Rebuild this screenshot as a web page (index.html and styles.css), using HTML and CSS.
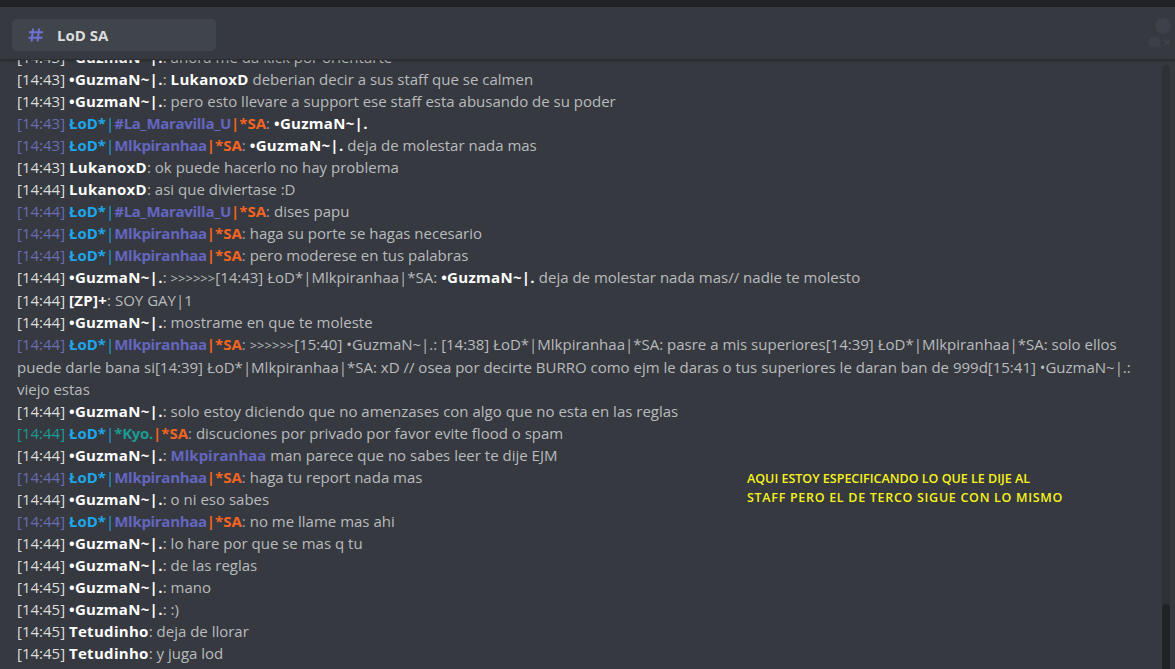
FILE: index.html
```html
<!DOCTYPE html>
<html lang="es">

<head>
    <meta charset="UTF-8">
    <meta name="viewport" content="width=device-width, initial-scale=1.0">
    <title>LoD SA</title>
    <link rel="stylesheet" href="styles.css">
</head>

<body>

    <div class="barra-superior"></div>

    <div class="cabecera">
        <div class="pestana">
            <svg class="icono-canal" width="16" height="14" viewBox="0 0 16 14">
                <path d="M5 0.5 L3.6 13.5 M11 0.5 L9.6 13.5 M1 4.3 H15 M0.5 9.7 H14.5" stroke="#6f72d6" stroke-width="2" fill="none"/>
            </svg>
            <span class="nombre-canal">LoD SA</span>
        </div>
        <div class="extras">
            <span class="circulo"></span>
            <div class="mini">
                <span class="cuadro"></span>
                <span class="cruz">✕</span>
            </div>
        </div>
    </div>

    <div class="chat">
        <div class="mensajes">
            <p class="linea"><span class="ts">[14:43]</span> <b class="nm">•GuzmaN~|.</b><span class="dp">:</span> <span class="tx">ahora me da kick por orientarte</span></p>
            <p class="linea"><span class="ts">[14:43]</span> <b class="nm">•GuzmaN~|.</b><span class="dp">:</span> <span class="tx"><b class="nm">LukanoxD</b> deberian decir a sus staff que se calmen</span></p>
            <p class="linea"><span class="ts">[14:43]</span> <b class="nm">•GuzmaN~|.</b><span class="dp">:</span> <span class="tx">pero esto llevare a support ese staff esta abusando de su poder</span></p>
            <p class="linea staff"><span class="ts">[14:43]</span> <b class="lod">ŁoD*</b><span class="barra">|</span><b class="rango">#La_Maravilla_U</b><b class="sa">|*SA</b><span class="dp">:</span> <span class="tx"><b class="nm">•GuzmaN~|.</b></span></p>
            <p class="linea staff"><span class="ts">[14:43]</span> <b class="lod">ŁoD*</b><span class="barra">|</span><b class="rango">Mlkpiranhaa</b><b class="sa">|*SA</b><span class="dp">:</span> <span class="tx"><b class="nm">•GuzmaN~|.</b> deja de molestar nada mas</span></p>
            <p class="linea"><span class="ts">[14:43]</span> <b class="nm">LukanoxD</b><span class="dp">:</span> <span class="tx">ok puede hacerlo no hay problema</span></p>
            <p class="linea"><span class="ts">[14:44]</span> <b class="nm">LukanoxD</b><span class="dp">:</span> <span class="tx">asi que diviertase :D</span></p>
            <p class="linea staff"><span class="ts">[14:44]</span> <b class="lod">ŁoD*</b><span class="barra">|</span><b class="rango">#La_Maravilla_U</b><b class="sa">|*SA</b><span class="dp">:</span> <span class="tx">dises papu</span></p>
            <p class="linea staff"><span class="ts">[14:44]</span> <b class="lod">ŁoD*</b><span class="barra">|</span><b class="rango">Mlkpiranhaa</b><b class="sa">|*SA</b><span class="dp">:</span> <span class="tx">haga su porte se hagas necesario</span></p>
            <p class="linea staff"><span class="ts">[14:44]</span> <b class="lod">ŁoD*</b><span class="barra">|</span><b class="rango">Mlkpiranhaa</b><b class="sa">|*SA</b><span class="dp">:</span> <span class="tx">pero moderese en tus palabras</span></p>
            <p class="linea"><span class="ts">[14:44]</span> <b class="nm">•GuzmaN~|.</b><span class="dp">:</span> <span class="tx"><span class="flechas">&gt;&gt;&gt;&gt;&gt;&gt;</span>[14:43] ŁoD*|Mlkpiranhaa|*SA: <b class="nm">•GuzmaN~|.</b> deja de molestar nada mas// nadie te molesto</span></p>
            <p class="linea"><span class="ts">[14:44]</span> <b class="nm">[ZP]+</b><span class="dp">:</span> <span class="tx">SOY GAY|1</span></p>
            <p class="linea"><span class="ts">[14:44]</span> <b class="nm">•GuzmaN~|.</b><span class="dp">:</span> <span class="tx">mostrame en que te moleste</span></p>
            <p class="linea staff"><span class="ts">[14:44]</span> <b class="lod">ŁoD*</b><span class="barra">|</span><b class="rango">Mlkpiranhaa</b><b class="sa">|*SA</b><span class="dp">:</span> <span class="tx"><span class="flechas">&gt;&gt;&gt;&gt;&gt;&gt;</span>[15:40] •GuzmaN~|.: [14:38] ŁoD*|Mlkpiranhaa|*SA: pasre a mis superiores[14:39] ŁoD*|Mlkpiranhaa|*SA: solo ellos<br>puede darle bana si[14:39] ŁoD*|Mlkpiranhaa|*SA: xD // osea por decirte BURRO como ejm le daras o tus superiores le daran ban de 999d[15:41] •GuzmaN~|.:<br>viejo estas</span></p>
            <p class="linea"><span class="ts">[14:44]</span> <b class="nm">•GuzmaN~|.</b><span class="dp">:</span> <span class="tx">solo estoy diciendo que no amenzases con algo que no esta en las reglas</span></p>
            <p class="linea kyo"><span class="ts">[14:44]</span> <b class="lod">ŁoD*</b><span class="barra">|</span><b class="rango">*Kyo.</b><b class="sa">|*SA</b><span class="dp">:</span> <span class="tx">discuciones por privado por favor evite flood o spam</span></p>
            <p class="linea"><span class="ts">[14:44]</span> <b class="nm">•GuzmaN~|.</b><span class="dp">:</span> <span class="tx"><b class="mencion">Mlkpiranhaa</b> man parece que no sabes leer te dije EJM</span></p>
            <p class="linea staff"><span class="ts">[14:44]</span> <b class="lod">ŁoD*</b><span class="barra">|</span><b class="rango">Mlkpiranhaa</b><b class="sa">|*SA</b><span class="dp">:</span> <span class="tx">haga tu report nada mas</span></p>
            <p class="linea"><span class="ts">[14:44]</span> <b class="nm">•GuzmaN~|.</b><span class="dp">:</span> <span class="tx">o ni eso sabes</span></p>
            <p class="linea staff"><span class="ts">[14:44]</span> <b class="lod">ŁoD*</b><span class="barra">|</span><b class="rango">Mlkpiranhaa</b><b class="sa">|*SA</b><span class="dp">:</span> <span class="tx">no me llame mas ahi</span></p>
            <p class="linea"><span class="ts">[14:44]</span> <b class="nm">•GuzmaN~|.</b><span class="dp">:</span> <span class="tx">lo hare por que se mas q tu</span></p>
            <p class="linea"><span class="ts">[14:44]</span> <b class="nm">•GuzmaN~|.</b><span class="dp">:</span> <span class="tx">de las reglas</span></p>
            <p class="linea"><span class="ts">[14:45]</span> <b class="nm">•GuzmaN~|.</b><span class="dp">:</span> <span class="tx">mano</span></p>
            <p class="linea"><span class="ts">[14:45]</span> <b class="nm">•GuzmaN~|.</b><span class="dp">:</span> <span class="tx">:)</span></p>
            <p class="linea"><span class="ts">[14:45]</span> <b class="nm">Tetudinho</b><span class="dp">:</span> <span class="tx">deja de llorar</span></p>
            <p class="linea"><span class="ts">[14:45]</span> <b class="nm">Tetudinho</b><span class="dp">:</span> <span class="tx">y juga lod</span></p>
            <p class="linea"><span class="ts">[14:45]</span> <b class="nm">•GuzmaN~|.</b><span class="dp">:</span> <span class="tx">ok</span></p>
        </div>

        <div class="scroll">
            <div class="scroll-barra"></div>
        </div>

        <p class="nota"><span>AQUI ESTOY ESPECIFICANDO LO QUE LE DIJE AL</span><br><span class="nota-ancha">STAFF PERO EL DE TERCO SIGUE CON LO MISMO</span></p>
    </div>

</body>

</html>
```

FILE: styles.css
```css
body {
    margin: 0;
    background-color: #36393f;
    font-family: "Open Sans", "Noto Sans", sans-serif;
    height: 669px;
    overflow: hidden;
    display: flex;
    flex-direction: column;
}

.barra-superior {
    height: 7px;
    background-color: #202225;
}

.cabecera {
    height: 52px;
    background-color: #36393f;
    border-bottom: 1px solid #2b2d31;
    box-shadow: 0 1px 2px rgba(0, 0, 0, 0.25);
    display: flex;
    justify-content: space-between;
    padding-left: 12px;
    position: relative;
    z-index: 2;
}

.pestana {
    margin-top: 12px;
    width: 204px;
    height: 32px;
    background-color: #40444b;
    border-radius: 5px;
    display: flex;
    align-items: center;
    gap: 13px;
    padding-left: 16px;
    box-sizing: border-box;
}

.nombre-canal {
    color: #dcddde;
    font-weight: bold;
    font-size: 15px;
}

.extras {
    width: 45px;
    display: flex;
    flex-direction: column;
    align-items: flex-end;
    padding-right: 4px;
}

.circulo {
    margin-top: 11px;
    width: 16px;
    height: 16px;
    border-radius: 50%;
    background-color: #3e4147;
}

.mini {
    display: flex;
    align-items: center;
    gap: 3px;
    margin-top: 3px;
}

.cuadro {
    width: 11px;
    height: 10px;
    border-radius: 3px;
    background-color: #3c3f45;
}

.cruz {
    color: #44474d;
    font-size: 10px;
    line-height: 10px;
}

.chat {
    flex: 1;
    display: flex;
    overflow: hidden;
    position: relative;
}

.mensajes {
    flex: 1;
    padding-left: 17px;
    margin-top: -14px;
}

.linea {
    margin: 0;
    font-size: 15px;
    line-height: 22px;
    color: #dcddde;
    white-space: nowrap;
}

.ts {
    color: #dcddde;
}

.nm {
    color: #ffffff;
    letter-spacing: 0.3px;
}

.dp {
    color: #b9bbbe;
}

.tx {
    color: #b9bbbe;
}

.flechas {
    font-size: 13px;
}

.staff .ts {
    color: #6a6cb4;
}

.lod {
    color: #1ea6e8;
}

.barra {
    color: #1ea6e8;
}

.rango {
    color: #6466c0;
    letter-spacing: -0.3px;
}

.sa {
    color: #f26522;
}

.staff .dp,
.kyo .dp {
    color: #8ea3b3;
}

.kyo .ts,
.kyo .rango {
    color: #1a9b94;
}

.mencion {
    color: #6466c0;
}

.scroll {
    width: 8px;
    margin: 5px 5px 0 0;
    background-color: #2e3136;
    border-radius: 4px 4px 0 0;
    display: flex;
    flex-direction: column;
    justify-content: flex-end;
}

.scroll-barra {
    height: 65px;
    background-color: #202225;
    border-radius: 4px 4px 0 0;
}

.nota {
    position: absolute;
    left: 747px;
    top: 409px;
    margin: 0;
    color: #f7f31c;
    font-family: "Open Sans", sans-serif;
    font-size: 12.5px;
    line-height: 19px;
    font-weight: 600;
}

.nota-ancha {
    letter-spacing: 0.7px;
}
```
